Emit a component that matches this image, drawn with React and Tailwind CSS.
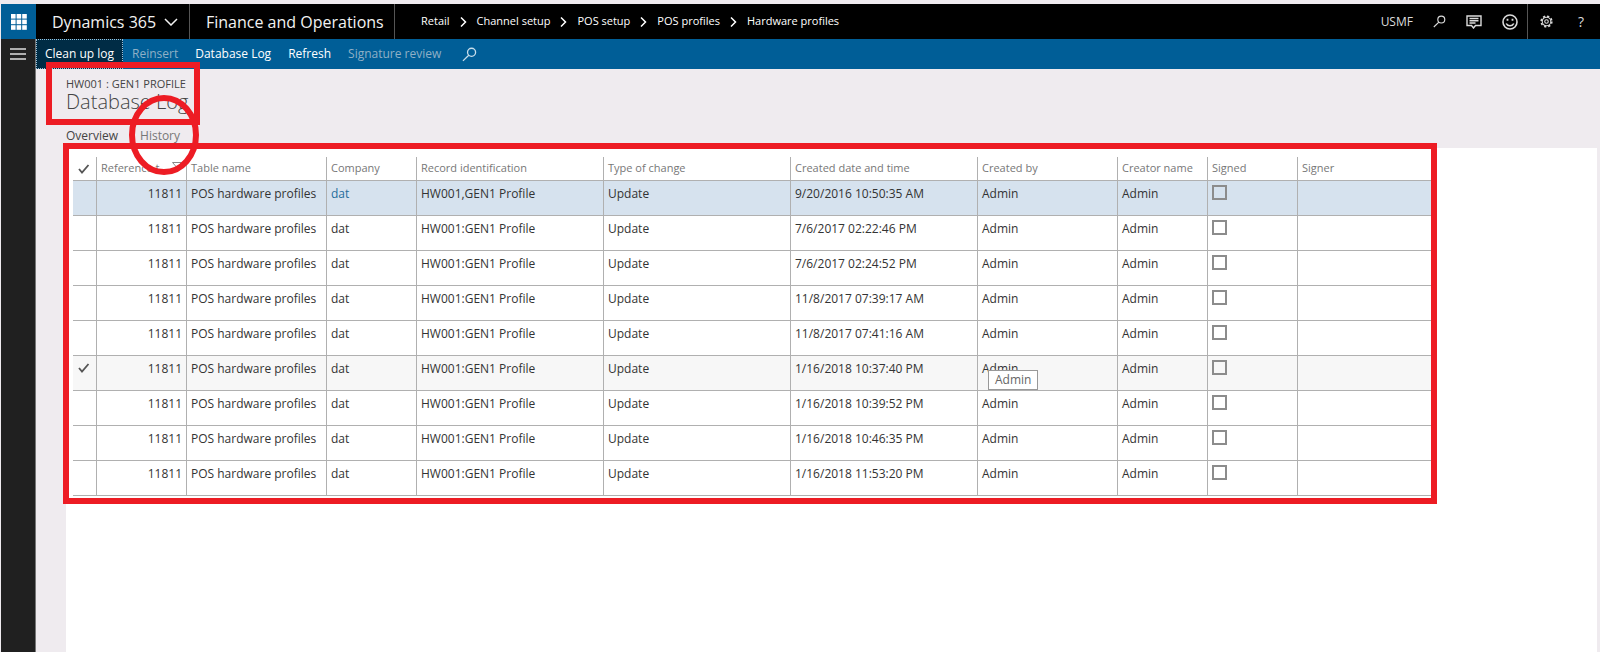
const columns = [
  { label: "Reference t...", width: "w-[90px]" },
  { label: "Table name", width: "w-[140px]" },
  { label: "Company", width: "w-[90px]" },
  { label: "Record identification", width: "w-[187px]" },
  { label: "Type of change", width: "w-[187px]" },
  { label: "Created date and time", width: "w-[187px]" },
  { label: "Created by", width: "w-[140px]" },
  { label: "Creator name", width: "w-[90px]" },
  { label: "Signed", width: "w-[90px]" },
  { label: "Signer", width: "" },
];

const rows = [
  { record: "HW001,GEN1 Profile", created: "9/20/2016 10:50:35 AM", active: true },
  { record: "HW001:GEN1 Profile", created: "7/6/2017 02:22:46 PM" },
  { record: "HW001:GEN1 Profile", created: "7/6/2017 02:24:52 PM" },
  { record: "HW001:GEN1 Profile", created: "11/8/2017 07:39:17 AM" },
  { record: "HW001:GEN1 Profile", created: "11/8/2017 07:41:16 AM" },
  { record: "HW001:GEN1 Profile", created: "1/16/2018 10:37:40 PM", hovered: true },
  { record: "HW001:GEN1 Profile", created: "1/16/2018 10:39:52 PM" },
  { record: "HW001:GEN1 Profile", created: "1/16/2018 10:46:35 PM" },
  { record: "HW001:GEN1 Profile", created: "1/16/2018 11:53:20 PM" },
];

const crumbs = ["Retail", "Channel setup", "POS setup", "POS profiles", "Hardware profiles"];

function SearchIcon({ className }) {
  return (
    <svg viewBox="0 0 16 16" className={className} fill="none" stroke="currentColor" strokeWidth="1.4" aria-hidden="true">
      <circle cx="10.2" cy="5.6" r="4.3" />
      <path d="M7.2 8.8 1 14.8" />
    </svg>
  );
}

function CheckIcon() {
  return (
    <svg viewBox="0 0 12 10" className="h-[10px] w-3" fill="none" stroke="#555" strokeWidth="1.8" aria-hidden="true">
      <path d="M1 5 4 8.5 10.5 1" />
    </svg>
  );
}

function TopBar() {
  return (
    <header className="flex h-[35px] items-stretch bg-black text-white">
      <button aria-label="App launcher" className="flex w-[35px] items-center justify-center bg-[#005e97]">
        <svg viewBox="0 0 16 16" className="size-4" fill="#fff" aria-hidden="true">
          {[0, 5.6, 11.2].map((y) => [0, 5.6, 11.2].map((x) => <rect key={x + "-" + y} x={x} y={y} width="4.6" height="4.6" />))}
        </svg>
      </button>
      <button className="flex w-[153px] items-center gap-2 pl-4 text-base text-[#f2f2f2]">
        <span>Dynamics 365</span>
        <svg viewBox="0 0 14 8" className="h-2 w-[14px]" fill="none" stroke="currentColor" strokeWidth="1.5" aria-hidden="true">
          <path d="M1 1l6 6 6-6" />
        </svg>
      </button>
      <div className="flex w-[206px] items-center whitespace-nowrap border-x border-[#555] pl-4 text-base text-[#f2f2f2]">
        Finance and Operations
      </div>
      <nav aria-label="Breadcrumb" className="flex items-center gap-[10px] pl-[26px] text-[11px] font-medium">
        {crumbs.map((c, i) => (
          <span key={c} className="flex items-center gap-[10px]">
            {i > 0 && (
              <svg viewBox="0 0 7 10" className="h-[10px] w-[7px]" fill="none" stroke="currentColor" strokeWidth="1.5" aria-hidden="true">
                <path d="M1 .5 5.500 5 1 9.500" />
              </svg>
            )}
            <a href="#" className="whitespace-nowrap">{c}</a>
          </span>
        ))}
      </nav>
      <div className="ml-auto flex items-center text-[#dcdcdc]">
        <button className="mr-5 text-xs font-medium">USMF</button>
        <button aria-label="Search" className="mr-5"><SearchIcon className="size-[13px]" /></button>
        <button aria-label="Messages" className="mr-5">
          <svg viewBox="0 0 16 14" className="h-[14px] w-4" fill="none" stroke="currentColor" strokeWidth="1.4" aria-hidden="true">
            <path d="M1 1h14v9.500H9.500L7.500 13 5.500 10.500H1zM3.500 3.500h9M3.500 5.700h9M3.500 8h6" />
          </svg>
        </button>
        <button aria-label="Feedback" className="mr-[9px]">
          <svg viewBox="0 0 16 16" className="size-4" fill="none" stroke="currentColor" strokeWidth="1.6" aria-hidden="true">
            <circle cx="8" cy="8" r="7" />
            <path d="M4.2 9.500c1.500 3 6.100 3 7.600 0" />
            <path d="M5.500 4.800v2M10.500 4.800v2" strokeWidth="1.8" />
          </svg>
        </button>
        <div className="h-full w-px bg-[#555]" />
        <button aria-label="Settings" className="mr-[25px] ml-3">
          <svg viewBox="0 0 14 14" className="size-[13px]" fill="none" stroke="currentColor" aria-hidden="true">
            <circle cx="7" cy="7" r="5.8" strokeWidth="1.6" strokeDasharray="2.4 2.15" />
            <circle cx="7" cy="7" r="4.6" strokeWidth="1.1" />
            <circle cx="7" cy="7" r="1.9" strokeWidth="1.2" />
          </svg>
        </button>
        <button aria-label="Help" className="mr-4 text-sm">?</button>
      </div>
    </header>
  );
}

function ActionBar() {
  return (
    <div className="flex h-[30px] items-stretch bg-[#005e97] text-xs font-medium whitespace-nowrap text-white">
      <button className="border border-dotted border-[#9cc3dc] bg-[#002c45] px-2">Clean up log</button>
      <div className="flex items-center gap-[17px] pl-[9px]">
        <button disabled className="font-normal text-[#8fb0c6]">Reinsert</button>
        <button>Database Log</button>
        <button>Refresh</button>
        <button disabled className="font-normal text-[#8fb0c6]">Signature review</button>
        <button aria-label="Search actions" className="ml-1 text-[#c9dfec]"><SearchIcon className="size-[15px]" /></button>
      </div>
    </div>
  );
}

function LogTable() {
  const cell = "border-b border-l border-[#b0b0b0] px-1 pt-[5px] align-top";
  return (
    <table className="w-full table-fixed border-separate border-spacing-0 text-left text-xs whitespace-nowrap text-[#333]">
      <thead>
        <tr className="h-6 text-[11px] text-[#777]">
          <th className="w-[23px] border-b border-[#b0b0b0] pl-[5px] font-normal"><CheckIcon /></th>
          {columns.map((c, i) => (
            <th key={c.label} className={"border-b border-l border-[#b0b0b0] pl-1 font-normal " + c.width}>
              {i === 0 ? (
                <span className="flex items-center justify-between pr-1">
                  <span>{c.label}</span>
                  <svg viewBox="0 0 10 10" className="-mt-1 size-[10px]" fill="none" stroke="#888" aria-hidden="true">
                    <path d="M.5.5h9L6 4.500V9L4 7.500V4.500z" />
                  </svg>
                </span>
              ) : c.label}
            </th>
          ))}
        </tr>
      </thead>
      <tbody>
        {rows.map((r, i) => (
          <tr key={i} className={"h-[35px] " + (r.active ? "bg-[#d6e2ee]" : r.hovered ? "bg-[#f7f7f7]" : "bg-white")}>
            <td className="border-b border-[#b0b0b0] pt-[7px] pl-[5px] align-top">{r.hovered && <CheckIcon />}</td>
            <td className={cell + " text-right"}>11811</td>
            <td className={cell}>POS hardware profiles</td>
            <td className={cell}>{r.active ? <a href="#" className="text-[#1f6d9c]">dat</a> : "dat"}</td>
            <td className={cell}>{r.record}</td>
            <td className={cell}>Update</td>
            <td className={cell}>{r.created}</td>
            <td className={cell}>
              <div className="relative">
                Admin
                {r.hovered && (
                  <div role="tooltip" className="absolute top-[9px] left-[6px] border border-[#999] bg-white px-[6px] py-px text-[#666]">
                    Admin
                  </div>
                )}
              </div>
            </td>
            <td className={cell}>Admin</td>
            <td className="border-b border-l border-[#b0b0b0] px-1 pt-1 align-top">
              <input
                type="checkbox"
                aria-label={"Signed " + r.created}
                className="block size-[15px] appearance-none border-2 border-[#8c8c8c]"
              />
            </td>
            <td className={cell}></td>
          </tr>
        ))}
      </tbody>
    </table>
  );
}

export default function App() {
  return (
    <div className="flex min-h-screen flex-col bg-[#efebef] pt-1 pl-px font-['Open_Sans','Noto_Sans',sans-serif]">
      <TopBar />
      <div className="flex grow">
        <aside className="w-[35px] shrink-0 border-r border-[#777] bg-[#202020]">
          <button aria-label="Expand navigation" className="flex h-[30px] w-full items-center justify-center">
            <svg viewBox="0 0 16 12" className="h-3 w-4" stroke="#ddd" strokeWidth="1.3" aria-hidden="true">
              <path d="M0 1h16M0 6h16M0 11h16" />
            </svg>
          </button>
        </aside>
        <div className="flex min-w-0 grow flex-col">
          <ActionBar />
          <main className="flex grow flex-col pr-[3px] pl-[30px]">
            <div className="relative self-start pt-[7px] pr-3">
              <p className="text-[11px] leading-4 whitespace-nowrap text-[#444]">HW001 : GEN1 PROFILE</p>
              <h1 className="text-xl leading-5 font-light whitespace-nowrap text-[#444]">Database Log</h1>
              <div className="pointer-events-none absolute -top-[7px] right-0 -bottom-[13px] -left-5 z-10 border-6 border-[#ed1c24]" />
            </div>
            <div role="tablist" className="relative flex gap-[22px] pt-[15px] pb-[3px] text-xs leading-[18px]">
              <button role="tab" aria-selected="true" className="text-[#444]">Overview</button>
              <button role="tab" aria-selected="false" className="text-[#777]">History</button>
              <svg viewBox="0 0 72 82" className="pointer-events-none absolute -top-[18px] left-[62px] z-10 h-[82px] w-[72px]" fill="none" stroke="#ed1c24" strokeWidth="6" aria-hidden="true">
                <ellipse cx="36" cy="41" rx="32" ry="37" />
              </svg>
            </div>
            <section className="grow bg-white pt-[9px] pr-[166px] pl-[7px]">
              <div className="relative">
                <LogTable />
                <div className="pointer-events-none absolute -top-[14px] -right-[6px] -bottom-2 -left-[10px] border-6 border-[#ed1c24]" />
              </div>
            </section>
          </main>
        </div>
      </div>
    </div>
  );
}
